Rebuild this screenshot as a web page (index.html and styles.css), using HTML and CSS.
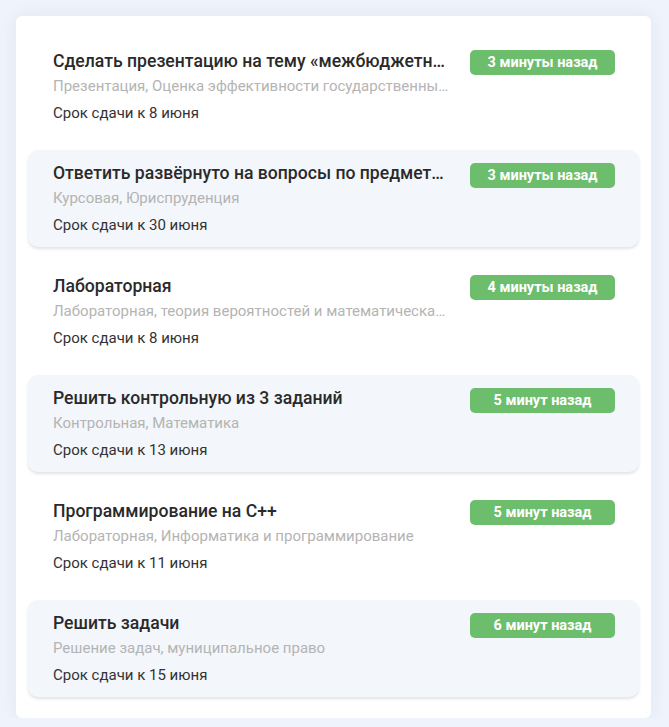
FILE: index.html
```html
<!DOCTYPE html>
<html lang="ru">
<head>
<meta charset="utf-8">
<title>Заказы</title>
<link rel="stylesheet" href="styles.css">
</head>
<body>
<div class="card">
  <div class="order">
    <div class="info">
      <div class="title">Сделать презентацию на тему «межбюджетн…</div>
      <div class="tags">Презентация, Оценка эффективности государственны…</div>
      <div class="deadline">Срок сдачи к 8 июня</div>
    </div>
    <div class="badge">3 минуты назад</div>
  </div>
  <div class="order shaded">
    <div class="info">
      <div class="title">Ответить развёрнуто на вопросы по предмет…</div>
      <div class="tags">Курсовая, Юриспруденция</div>
      <div class="deadline">Срок сдачи к 30 июня</div>
    </div>
    <div class="badge">3 минуты назад</div>
  </div>
  <div class="order">
    <div class="info">
      <div class="title">Лабораторная</div>
      <div class="tags">Лабораторная, теория вероятностей и математическа…</div>
      <div class="deadline">Срок сдачи к 8 июня</div>
    </div>
    <div class="badge">4 минуты назад</div>
  </div>
  <div class="order shaded">
    <div class="info">
      <div class="title">Решить контрольную из 3 заданий</div>
      <div class="tags">Контрольная, Математика</div>
      <div class="deadline">Срок сдачи к 13 июня</div>
    </div>
    <div class="badge">5 минут назад</div>
  </div>
  <div class="order">
    <div class="info">
      <div class="title">Программирование на С++</div>
      <div class="tags">Лабораторная, Информатика и программирование</div>
      <div class="deadline">Срок сдачи к 11 июня</div>
    </div>
    <div class="badge">5 минут назад</div>
  </div>
  <div class="order shaded">
    <div class="info">
      <div class="title">Решить задачи</div>
      <div class="tags">Решение задач, муниципальное право</div>
      <div class="deadline">Срок сдачи к 15 июня</div>
    </div>
    <div class="badge">6 минут назад</div>
  </div>
</div>
</body>
</html>
```

FILE: styles.css
```css
* { box-sizing: border-box; }
html, body { margin: 0; }
body {
  background: #eff4fc;
  padding: 16px 18px 0 16px;
  font-family: Roboto, "Noto Sans", Arial, sans-serif;
}
.card {
  background: #ffffff;
  border-radius: 6px;
  padding: 21.5px 12px 21px 12px;
  display: flex;
  flex-direction: column;
  gap: 15.5px;
  box-shadow: 0 0 18px rgba(160, 180, 215, 0.22);
}
.order {
  display: flex;
  align-items: flex-start;
  height: 97px;
  padding: 13px 24px 0 25px;
  border-radius: 10px;
}
.order.shaded {
  background: #f3f6fa;
  box-shadow: 0 2px 3px rgba(20, 40, 90, 0.13);
}
.info {
  flex: 1;
  min-width: 0;
}
.title {
  font-size: 17.6px;
  font-weight: 500;
  line-height: 20px;
  color: #2a2a2a;
  white-space: nowrap;
  overflow: hidden;
  text-overflow: ellipsis;
}
.tags {
  margin-top: 5px;
  font-size: 15px;
  line-height: 20px;
  color: #b4b4b4;
  white-space: nowrap;
  overflow: hidden;
  text-overflow: ellipsis;
}
.deadline {
  margin-top: 7px;
  font-size: 15px;
  line-height: 20px;
  color: #333333;
}
.badge {
  flex: none;
  width: 145px;
  height: 25px;
  margin-left: 21px;
  margin-top: -0.5px;
  border-radius: 5px;
  background: #6cbd6c;
  color: #ffffff;
  font-size: 14.5px;
  font-weight: 700;
  line-height: 25px;
  text-align: center;
}
```
